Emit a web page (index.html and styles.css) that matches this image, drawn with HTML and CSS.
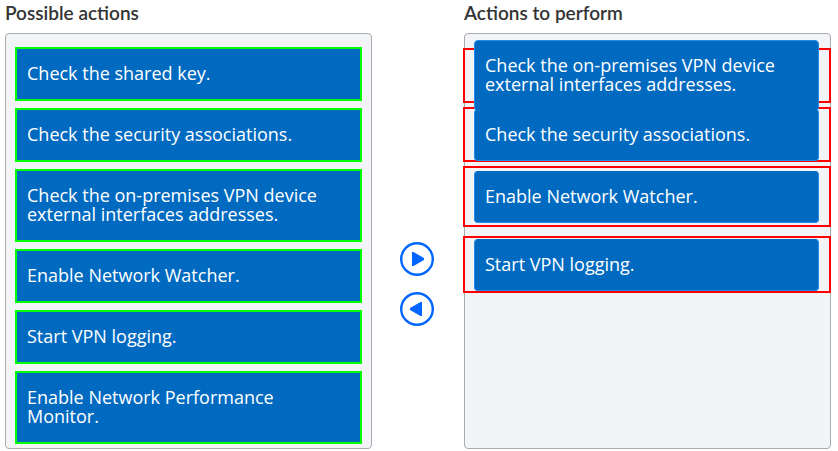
FILE: index.html
```html
<!DOCTYPE html>
<html lang="en">
<head>
<meta charset="utf-8">
<meta name="viewport" content="width=device-width, initial-scale=1">
<title>Possible actions</title>
<link rel="stylesheet" href="styles.css">
</head>
<body>
<main class="board">
  <section class="column" aria-labelledby="possible">
    <h2 class="title" id="possible">Possible actions</h2>
    <ul class="panel source">
      <li><button class="tile" type="button">Check the shared key.</button></li>
      <li><button class="tile" type="button">Check the security associations.</button></li>
      <li><button class="tile" type="button">Check the on-premises VPN device external interfaces addresses.</button></li>
      <li><button class="tile" type="button">Enable Network Watcher.</button></li>
      <li><button class="tile" type="button">Start VPN logging.</button></li>
      <li><button class="tile" type="button">Enable Network Performance Monitor.</button></li>
    </ul>
  </section>

  <div class="controls">
    <button class="move" type="button" aria-label="Add action">
      <svg viewBox="0 0 34 34" aria-hidden="true"><circle cx="17" cy="17" r="15.8"/><path d="M12 10h1.500L24 16v2L13.500 24H12z"/></svg>
    </button>
    <button class="move" type="button" aria-label="Remove action">
      <svg viewBox="0 0 34 34" aria-hidden="true"><circle cx="17" cy="17" r="15.8"/><path d="M22 10h-1.500L10 16v2l10.500 6H22z"/></svg>
    </button>
  </div>

  <section class="column" aria-labelledby="perform">
    <h2 class="title" id="perform">Actions to perform</h2>
    <ol class="panel target">
      <li class="slot"><button class="tile" type="button">Check the on-premises VPN device external interfaces addresses.</button></li>
      <li class="slot"><button class="tile" type="button">Check the security associations.</button></li>
      <li class="slot slot-roomy"><button class="tile" type="button">Enable Network Watcher.</button></li>
      <li class="slot slot-last"><button class="tile" type="button">Start VPN logging.</button></li>
    </ol>
  </section>
</main>
</body>
</html>
```
FILE: styles.css
```css
* {
  box-sizing: border-box;
}

body {
  margin: 0;
  background: #fff;
  color: #333;
  font-family: "Noto Sans", "Open Sans", sans-serif;
}

.board {
  display: grid;
  grid-template-columns: 1fr 92px 1fr;
  padding: 0 7px 2px 5px;
}

.column {
  display: flex;
  flex-direction: column;
  min-width: 0;
}

.title {
  margin: 0;
  padding: 1px 0 8px;
  font-family: Lato, sans-serif;
  font-size: 19px;
  font-weight: 600;
  line-height: 24px;
}

.panel {
  flex: 1;
  margin: 0;
  padding: 14px 10px 5px;
  border: 1px solid #a9abad;
  border-radius: 4px;
  background: #f3f4f7;
  list-style: none;
}

.source {
  display: flex;
  flex-direction: column;
  gap: 9px;
}

.tile {
  display: block;
  width: 100%;
  padding: 15px 10px 16px;
  border: 1px solid #1f8ceb;
  border-radius: 4px;
  background: #006ac1;
  color: #fff;
  font: 400 18px/19px "Open Sans", "Noto Sans", sans-serif;
  text-align: left;
  cursor: pointer;
}

.source .tile {
  outline: 2px solid #0f0;
  outline-offset: -1px;
  border-radius: 0;
}

.target {
  padding-right: 0;
  padding-left: 0;
}

/* Slots reach over the panel's side borders. */
.slot {
  display: flex;
  align-items: center;
  height: 55px;
  margin: 0 -1px 4px -2px;
  padding: 0 10px 0 9px;
  border: 2px solid #f00;
}

.slot + .slot .tile {
  border-top-color: #006ac1;
}

.slot-roomy {
  height: 61px;
  margin-bottom: 9px;
}

.slot-last {
  height: 57px;
  margin-bottom: 0;
}

.controls {
  display: flex;
  flex-direction: column;
  align-items: center;
  gap: 16px;
  padding: 242px 2px 0 0;
}

.move {
  width: 34px;
  height: 34px;
  padding: 0;
  border: 0;
  background: none;
  cursor: pointer;
}

.move svg {
  display: block;
  width: 100%;
  height: 100%;
}

.move circle {
  fill: #fff;
  stroke: #06f;
  stroke-width: 2.400;
}

.move path {
  fill: #06f;
}
```
